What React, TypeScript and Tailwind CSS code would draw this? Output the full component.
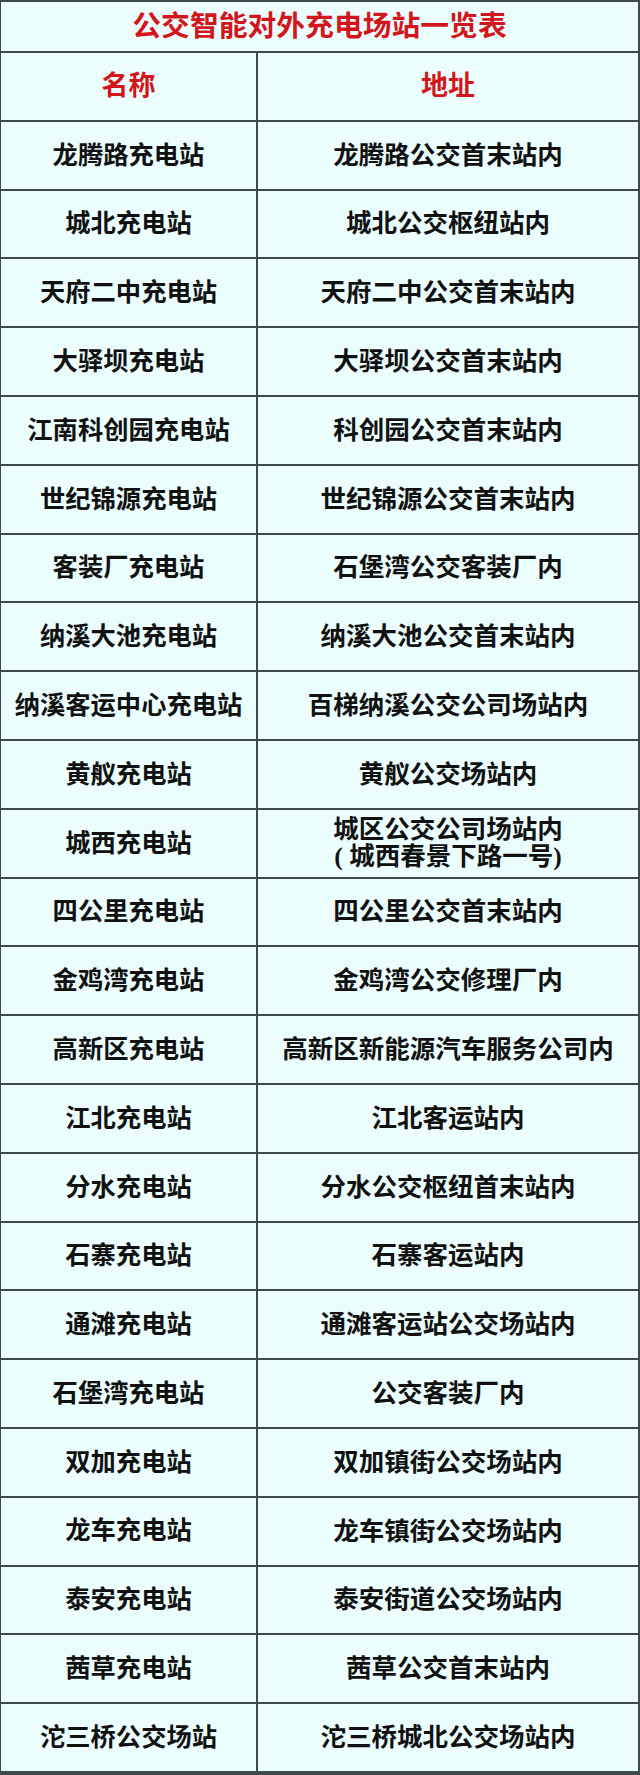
const rows: Array<[string, string[]]> = [
  ["龙腾路充电站", ["龙腾路公交首末站内"]],
  ["城北充电站", ["城北公交枢纽站内"]],
  ["天府二中充电站", ["天府二中公交首末站内"]],
  ["大驿坝充电站", ["大驿坝公交首末站内"]],
  ["江南科创园充电站", ["科创园公交首末站内"]],
  ["世纪锦源充电站", ["世纪锦源公交首末站内"]],
  ["客装厂充电站", ["石堡湾公交客装厂内"]],
  ["纳溪大池充电站", ["纳溪大池公交首末站内"]],
  ["纳溪客运中心充电站", ["百梯纳溪公交公司场站内"]],
  ["黄舣充电站", ["黄舣公交场站内"]],
  ["城西充电站", ["城区公交公司场站内", "( 城西春景下路一号)"]],
  ["四公里充电站", ["四公里公交首末站内"]],
  ["金鸡湾充电站", ["金鸡湾公交修理厂内"]],
  ["高新区充电站", ["高新区新能源汽车服务公司内"]],
  ["江北充电站", ["江北客运站内"]],
  ["分水充电站", ["分水公交枢纽首末站内"]],
  ["石寨充电站", ["石寨客运站内"]],
  ["通滩充电站", ["通滩客运站公交场站内"]],
  ["石堡湾充电站", ["公交客装厂内"]],
  ["双加充电站", ["双加镇街公交场站内"]],
  ["龙车充电站", ["龙车镇街公交场站内"]],
  ["泰安充电站", ["泰安街道公交场站内"]],
  ["茜草充电站", ["茜草公交首末站内"]],
  ["沱三桥公交场站", ["沱三桥城北公交场站内"]],
];

export default function App() {
  return (
    <div
      className="w-[640px] h-[1775px] flex flex-col bg-[#ebfdfd] border-t-2 border-r-2 border-l border-b-4 border-[#3f4a48] font-bold text-[#111111]"
      style={{ fontFamily: '"Liberation Serif", "Noto Sans CJK SC", serif' }}
    >
      <div className="h-[51px] shrink-0 flex items-center justify-center border-b-2 border-[#3f4a48] text-[28.8px] text-[#d3161c] leading-none">
        公交智能对外充电场站一览表
      </div>

      <div className="flex-1 flex border-b-2 border-[#3f4a48] text-[27px] text-[#d3161c] leading-none">
        <div className="w-[257px] shrink-0 flex items-center justify-center border-r-2 border-[#3f4a48]">
          名称
        </div>
        <div className="flex-1 flex items-center justify-center">地址</div>
      </div>

      {rows.map(([name, addr], i) => (
        <div
          key={name}
          className={`flex-1 flex text-[25.3px] ${
            i < rows.length - 1 ? "border-b-2 border-[#3f4a48]" : ""
          }`}
        >
          <div className="w-[257px] shrink-0 flex items-center justify-center border-r-2 border-[#3f4a48] leading-none">
            {name}
          </div>
          <div className="flex-1 flex flex-col items-center justify-center leading-[27px] text-[25.5px]">
            {addr.map((line) => (
              <span key={line}>{line}</span>
            ))}
          </div>
        </div>
      ))}
    </div>
  );
}
